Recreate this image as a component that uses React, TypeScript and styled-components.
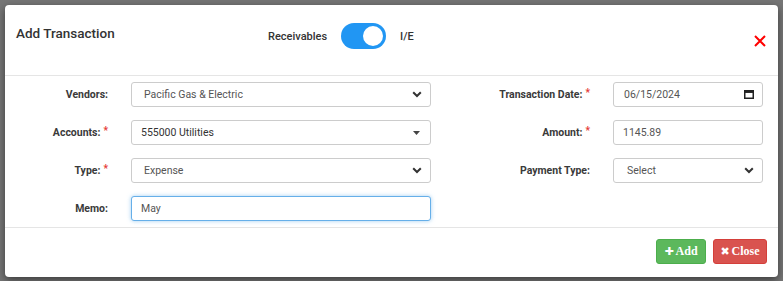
import React from 'react';
import styled, { createGlobalStyle } from 'styled-components';

const GlobalStyle = createGlobalStyle`
  html, body {
    margin: 0;
    padding: 0;
    background: #767676;
  }
  * { box-sizing: border-box; }
`;

const Backdrop = styled.div`
  width: 783px;
  height: 281px;
  background: #767676;
  padding: 5px 5px 0;
  overflow: hidden;
  font-family: Roboto, 'Liberation Sans', sans-serif;
`;

const Modal = styled.div`
  width: 773px;
  height: 272px;
  background: #fff;
  border-radius: 4px;
  box-shadow: 0 3px 9px rgba(0, 0, 0, 0.5);
  display: flex;
  flex-direction: column;
`;

const Header = styled.div`
  height: 71px;
  display: flex;
  align-items: flex-start;
  padding: 18px 12px 0 11px;
  border-bottom: 1px solid #e5e5e5;
`;

const Title = styled.h4`
  margin: 0;
  width: 252px;
  font-size: 13.5px;
  font-weight: 500;
  color: #333;
  line-height: 20px;
`;

const ToggleGroup = styled.div`
  display: flex;
  align-items: center;
  gap: 14px;
  flex: 1;
`;

const ToggleLabel = styled.span`
  font-size: 11px;
  font-weight: 500;
  color: #333;
`;

const Switch = styled.div<{ $on: boolean }>`
  width: 45px;
  height: 26px;
  border-radius: 13px;
  background: ${p => (p.$on ? '#2196f3' : '#ccc')};
  display: flex;
  align-items: center;
  justify-content: ${p => (p.$on ? 'flex-end' : 'flex-start')};
  padding: 0 3px;
`;

const Knob = styled.div`
  width: 20px;
  height: 20px;
  border-radius: 50%;
  background: #fff;
`;

const CloseX = styled.button`
  border: 0;
  background: none;
  padding: 0;
  margin-top: 12px;
  width: 12px;
  height: 12px;
  display: flex;
  cursor: pointer;
`;

const Body = styled.div`
  display: grid;
  grid-template-columns: 103px 300px 136px 150px;
  grid-auto-rows: 25px;
  column-gap: 23px;
  row-gap: 13px;
  padding: 6px 15px 6px 0;
  border-bottom: 1px solid #e5e5e5;
`;

const Label = styled.label`
  display: flex;
  align-items: center;
  justify-content: flex-end;
  font-size: 10.5px;
  font-weight: 700;
  color: #3a3a3a;
  white-space: nowrap;
`;

const Req = styled.span`
  color: #e53935;
  margin-left: 3px;
  font-size: 10px;
  position: relative;
  top: -2px;
`;

const Box = styled.div<{ $dark?: boolean; $pad?: number }>`
  height: 25px;
  border: 1px solid #ccc;
  border-radius: 3px;
  background: #fff;
  display: flex;
  align-items: center;
  justify-content: space-between;
  padding: 0 8px 0 ${p => p.$pad ?? 12}px;
  font-size: 10.5px;
  color: ${p => (p.$dark ? '#333' : '#555')};
`;

const TextInput = styled.input<{ $focus?: boolean; $pad?: number }>`
  height: 25px;
  width: 100%;
  border: 1px solid ${p => (p.$focus ? '#66afe9' : '#ccc')};
  border-radius: 3px;
  padding: 0 0 0 ${p => p.$pad ?? 9}px;
  font-family: Roboto, 'Liberation Sans', sans-serif;
  font-size: 10.5px;
  color: #555;
  outline: none;
  box-shadow: ${p => (p.$focus ? '0 0 4px rgba(102, 175, 233, 0.6)' : 'none')};
`;

const Footer = styled.div`
  flex: 1;
  display: flex;
  justify-content: flex-end;
  align-items: flex-start;
  gap: 7px;
  padding: 11px 11px 0 0;
`;

const Btn = styled.button<{ $variant: 'add' | 'close' }>`
  height: 25px;
  width: ${p => (p.$variant === 'add' ? 50 : 54)}px;
  border-radius: 3px;
  border: 1px solid ${p => (p.$variant === 'add' ? '#4cae4c' : '#d43f3a')};
  background: ${p => (p.$variant === 'add' ? '#5cb85c' : '#d9534f')};
  color: #fff;
  font-family: 'Liberation Serif', serif;
  font-weight: 700;
  font-size: 12px;
  padding: 0;
  display: flex;
  align-items: center;
  justify-content: center;
  gap: 2px;
`;

const BtnIcon = styled.span`
  font-family: 'DejaVu Sans', sans-serif;
  font-size: 11px;
`;

const Chevron = () => (
  <svg width="10" height="7" viewBox="0 0 10 7">
    <path d="M1.2 1.2L5 5l3.8-3.8" fill="none" stroke="#333" strokeWidth="2" />
  </svg>
);

const Caret = () => (
  <svg width="7" height="4" viewBox="0 0 7 4">
    <path d="M0 0h7L3.5 4z" fill="#444" />
  </svg>
);

const Calendar = () => (
  <svg width="10" height="9" viewBox="0 0 10 9">
    <rect x="0.75" y="0.75" width="8.5" height="7.5" fill="none" stroke="#222" strokeWidth="1.5" />
    <rect x="0.75" y="0.75" width="8.5" height="2.2" fill="#222" />
  </svg>
);

export default function App() {
  return (
    <>
      <GlobalStyle />
      <Backdrop>
        <Modal>
          <Header>
            <Title>Add Transaction</Title>
            <ToggleGroup>
              <ToggleLabel>Receivables</ToggleLabel>
              <Switch $on>
                <Knob />
              </Switch>
              <ToggleLabel>I/E</ToggleLabel>
            </ToggleGroup>
            <CloseX aria-label="close">
              <svg width="12" height="12" viewBox="0 0 12 12">
                <path d="M1 1l10 10M11 1L1 11" stroke="#f00" strokeWidth="2" />
              </svg>
            </CloseX>
          </Header>
          <Body>
            <Label>Vendors:</Label>
            <Box>
              <span>Pacific Gas &amp; Electric</span>
              <Chevron />
            </Box>
            <Label>
              Transaction Date:<Req>*</Req>
            </Label>
            <Box $pad={10}>
              <span>06/15/2024</span>
              <Calendar />
            </Box>

            <Label>
              Accounts:<Req>*</Req>
            </Label>
            <Box $dark $pad={9} style={{ paddingRight: 10 }}>
              <span>555000 Utilities</span>
              <Caret />
            </Box>
            <Label>
              Amount:<Req>*</Req>
            </Label>
            <TextInput defaultValue="1145.89" $pad={9} />

            <Label>
              Type:<Req>*</Req>
            </Label>
            <Box>
              <span>Expense</span>
              <Chevron />
            </Box>
            <Label>Payment Type:</Label>
            <Box $pad={13}>
              <span>Select</span>
              <Chevron />
            </Box>

            <Label>Memo:</Label>
            <TextInput defaultValue="May" $focus />
          </Body>
          <Footer>
            <Btn $variant="add">
              <BtnIcon>✚</BtnIcon>Add
            </Btn>
            <Btn $variant="close">
              <BtnIcon>✖</BtnIcon>Close
            </Btn>
          </Footer>
        </Modal>
      </Backdrop>
    </>
  );
}
